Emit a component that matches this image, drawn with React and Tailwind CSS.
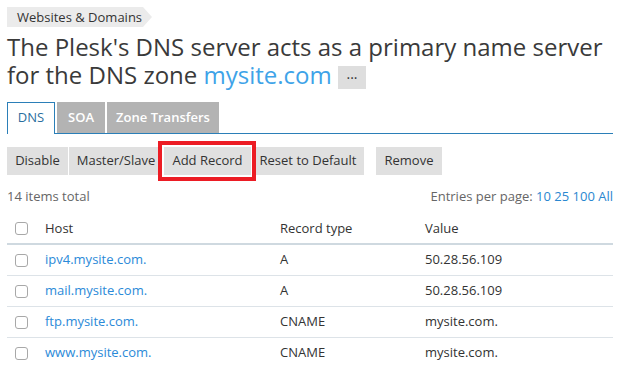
import React from 'react'

const ROWS = [
  { host: 'ipv4.mysite.com.', type: 'A', value: '50.28.56.109' },
  { host: 'mail.mysite.com.', type: 'A', value: '50.28.56.109' },
  { host: 'ftp.mysite.com.', type: 'CNAME', value: 'mysite.com.' },
  { host: 'www.mysite.com.', type: 'CNAME', value: 'mysite.com.' }
]

function Checkbox() {
  return <span className="block w-[13px] h-[13px] rounded-[3px] border border-[#a8a8a8] bg-white" />
}

export default function App() {
  return (
    <div className="w-[624px] h-[365px] overflow-hidden bg-white text-[#333] pl-[7px] pr-[11px] pt-[7px]" style={{ fontFamily: '"Open Sans", sans-serif' }}>
      <div className="flex">
        <div className="h-[20px] bg-[#ebebeb] pl-[10px] pr-[1px] text-[13px] leading-[20px] text-[#333]">Websites &amp; Domains</div>
        <div className="w-0 h-0 border-y-[10px] border-y-transparent border-l-[9px] border-l-[#ebebeb]" />
      </div>

      <h1 className="mt-[6px] text-[24px] leading-[28px] text-[#3a3a3a]">
        The Plesk's DNS server acts as a primary name server for the DNS zone{' '}
        <span className="text-[#3ea3e8]">mysite.com</span>{' '}
        <span className="inline-flex items-center justify-center align-middle w-[28px] h-[23px] bg-[#dedede] text-[14px] leading-none text-[#333] relative top-[0px]">···</span>
      </h1>

      <div className="mt-[13px] flex items-end border-b border-[#2b7fb8] h-[32px]">
        <div className="h-[32px] w-[48px] border border-b-0 border-[#2b7fb8] bg-white flex items-center justify-center text-[13px] text-[#2b6e9e] -mb-px pb-px">DNS</div>
        <div className="h-[31px] w-[48px] ml-[2px] bg-[#b3b3b3] flex items-center justify-center text-[13px] font-semibold text-white">SOA</div>
        <div className="h-[31px] w-[112px] ml-[2px] bg-[#b3b3b3] flex items-center justify-center text-[13px] font-semibold text-white">Zone Transfers</div>
      </div>

      <div className="relative mt-[7px] flex items-center h-[40px] text-[13px] text-[#333]">
        <div className="h-[28px] w-[61px] bg-[#e0e0e0] flex items-center justify-center">Disable</div>
        <div className="h-[28px] w-[94px] bg-[#e0e0e0] flex items-center justify-center ml-px">Master/Slave</div>
        <div className="h-[28px] w-[87px] bg-[#e0e0e0] flex items-center justify-center ml-px">Add Record</div>
        <div className="h-[28px] w-[112px] bg-[#e0e0e0] flex items-center justify-center ml-px">Reset to Default</div>
        <div className="h-[28px] w-[66px] bg-[#e0e0e0] flex items-center justify-center ml-[12px]">Remove</div>
        <div className="absolute left-[151px] top-0 w-[98px] h-[40px] border-[4px] border-[#ec1c24]">
          <div className="w-full h-full border border-white" />
        </div>
      </div>

      <div className="mt-[6px] flex justify-between text-[13px] leading-[18px]">
        <span className="text-[#666]">14 items total</span>
        <span className="text-[#666]">
          Entries per page: <span className="text-[#2a87d0]">10 25 100 All</span>
        </span>
      </div>

      <table className="mt-[9px] w-full text-[13px] border-collapse">
        <thead>
          <tr className="border-b-2 border-[#cfd9e0] h-[30px]">
            <th className="w-[38px] pl-[8px] align-middle font-normal"><Checkbox /></th>
            <th className="text-left font-normal w-[235px]">Host</th>
            <th className="text-left font-normal w-[145px]">Record type</th>
            <th className="text-left font-normal">Value</th>
          </tr>
        </thead>
        <tbody>
          {ROWS.map((r, i) => (
            <tr key={i} className="border-b border-[#dde3e8] h-[31px]">
              <td className="pl-[8px] align-middle pt-[2px]"><Checkbox /></td>
              <td className="text-[#2b8ad8]">{r.host}</td>
              <td>{r.type}</td>
              <td>{r.value}</td>
            </tr>
          ))}
        </tbody>
      </table>
    </div>
  )
}
